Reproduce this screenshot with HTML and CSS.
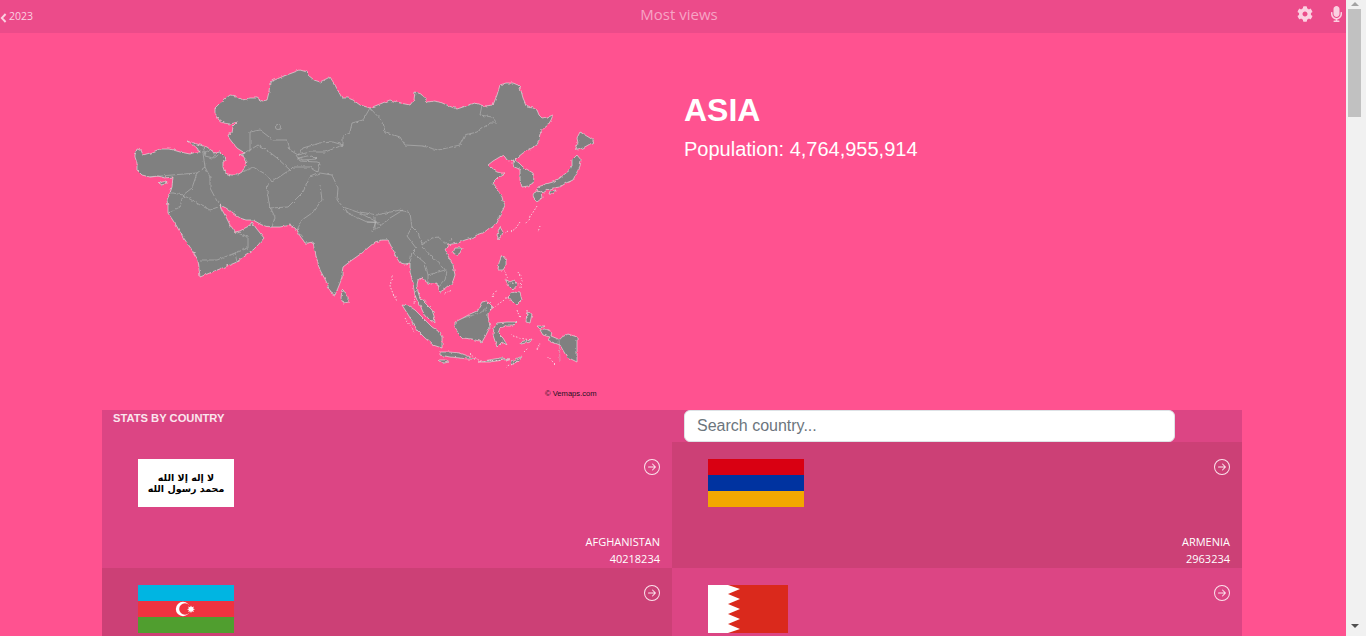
FILE: index.html
```html
<!DOCTYPE html>
<html lang="en">
<head>
<meta charset="utf-8">
<title>Most views</title>
<link rel="stylesheet" href="styles.css">
</head>
<body>
<div class="app">
  <header class="topbar">
    <a class="back">
      <svg class="chevron" viewBox="0 0 7 10"><path d="M5.6 1 1.8 5l3.8 4" /></svg>
      <span>2023</span>
    </a>
    <div class="title">Most views</div>
    <div class="tools">
      <svg class="gear" viewBox="0 0 512 512"><path d="M487.4 315.7l-42.6-24.6c4.3-23.2 4.3-47 0-70.2l42.6-24.6c4.9-2.8 7.1-8.6 5.5-14-11.1-35.6-30-67.8-54.7-94.6-3.8-4.1-10-5.1-14.8-2.3L380.8 110c-17.9-15.4-38.5-27.3-60.8-35.1V25.8c0-5.6-3.9-10.5-9.4-11.7-36.7-8.2-74.3-7.8-109.2 0-5.5 1.2-9.4 6.1-9.4 11.7V75c-22.2 7.9-42.8 19.8-60.8 35.1L88.7 85.5c-4.9-2.8-11-1.9-14.8 2.3-24.7 26.7-43.6 58.9-54.7 94.6-1.7 5.4.6 11.2 5.5 14L67.3 221c-4.3 23.2-4.3 47 0 70.2l-42.6 24.6c-4.9 2.8-7.1 8.6-5.5 14 11.1 35.6 30 67.8 54.7 94.6 3.8 4.1 10 5.1 14.8 2.3l42.6-24.6c17.9 15.4 38.5 27.3 60.8 35.1v49.2c0 5.6 3.9 10.5 9.4 11.7 36.7 8.2 74.3 7.8 109.2 0 5.5-1.2 9.4-6.1 9.4-11.7v-49.2c22.2-7.9 42.8-19.8 60.8-35.1l42.6 24.6c4.9 2.8 11 1.9 14.8-2.3 24.7-26.7 43.6-58.9 54.7-94.6 1.5-5.5-.7-11.3-5.6-14.1zM256 336c-44.1 0-80-35.9-80-80s35.9-80 80-80 80 35.9 80 80-35.9 80-80 80z"/></svg>
      <svg class="mic" viewBox="0 0 352 512"><path d="M176 352c53.02 0 96-42.98 96-96V96c0-53.02-42.98-96-96-96S80 42.98 80 96v160c0 53.02 42.98 96 96 96zm160-160h-16c-8.84 0-16 7.16-16 16v48c0 74.8-64.49 134.82-140.79 127.38C96.71 376.89 48 317.11 48 250.3V208c0-8.84-7.16-16-16-16H16c-8.84 0-16 7.16-16 16v40.16c0 89.64 63.97 169.55 152 181.69V464H96c-8.84 0-16 7.16-16 16v16c0 8.84 7.16 16 16 16h160c8.84 0 16-7.16 16-16v-16c0-8.84-7.16-16-16-16h-56v-33.77C285.71 418.47 352 344.9 352 256v-48c0-8.84-7.16-16-16-16z"/></svg>
    </div>
  </header>

  <main class="container">
    <section class="hero">
      <svg class="map" viewBox="102 33 570 377">
        <defs>
          <filter id="rough" x="-5%" y="-5%" width="110%" height="110%">
            <feTurbulence type="fractalNoise" baseFrequency="0.22" numOctaves="2" seed="4"/>
            <feDisplacementMap in="SourceGraphic" scale="3.2" xChannelSelector="R" yChannelSelector="G"/>
          </filter>
        </defs>
        <g class="terrain">
        <g class="land">
          <path d="M135 155 137 149 141 150 143 155 150 153 160 149 170 149 180 152 190 154 196 152 200 152 196 147 188 141 194 143 200 145 207 147 215 153 220 152 225 157 226 160 223 162 223 167 225 173 231 175 237 175 242 172 245 166 246 160 243 156 239 155 245 153 240 150 237 148 232 142 229 138 228 135 232 133 233 127 238 122 230 124 223 123 219 120 215 113 215 108 220 103 225 99 230 95 236 96 243 100 250 98 257 98 262 101 267 100 269 92 270 82 284 76 300 70 307 72 308 75 314 80 320 82 330 77 335 85 342 98 348 98 353 100 360 105 370 108 380 104 390 100 400 103 410 105 414 100 415 92 421 94 428 102 434 101 440 102 449 106 457 109 466 106 475 103 484 106 493 105 497 95 500 85 506 83 513 83 518 85 520 87 523 98 527 107 533 108 537 110 539 115 542 118 548 117 553 115 551 120 548 125 543 129 540 133 539 140 537 145 530 149 523 153 518 157 515 160 519 163 523 167 528 170 533 173 534 178 533 183 528 186 522 187 520 180 520 170 517 168 514 167 513 163 514 160 509 161 507 160 505 157 503 155 498 158 493 161 488 165 492 169 497 172 501 173 505 173 500 176 496 180 493 183 498 190 502 197 503 201 505 205 502 212 499 218 497 223 491 228 487 230 483 233 477 235 472 238 465 240 458 243 452 244 448 245 445 250 449 258 453 265 455 275 453 281 450 285 445 289 440 292 438 290 437 283 432 284 428 283 425 281 422 277 418 280 417 285 418 292 420 298 426 304 432 310 434 316 435 323 431 321 428 318 423 312 420 305 417 300 415 295 413 283 410 272 410 263 405 264 400 263 396 257 393 250 390 244 388 240 382 240 375 242 369 247 362 253 352 260 343 267 342 273 342 278 338 288 335 295 331 293 330 290 326 281 320 270 316 256 313 242 309 243 305 243 303 240 300 236 298 232 295 228 290 225 280 227 270 227 262 225 253 220 246 220 240 218 232 212 226 208 220 205 221 208 222 210 226 217 230 225 233 229 235 232 240 231 245 228 249 226 252 222 256 228 260 233 264 238 258 245 253 250 245 255 237 262 225 267 212 272 200 277 199 268 198 260 192 250 183 237 176 225 168 213 168 206 167 200 170 193 172 187 173 177 165 178 158 176 150 177 142 175 137 170 137 163 135 157Z"/>
          <path d="M580 132 585 135 590 138 595 142 590 144 583 148 578 150 575 148 578 143 577 138Z"/>
          <path d="M577 155 581 160 580 166 578 170 575 176 573 180 566 183 560 187 553 188 547 190 543 193 537 190 538 187 546 184 553 182 560 178 566 173 570 170 572 165 572 160Z"/>
          <path d="M535 191 541 192 542 198 537 202 534 199 533 195Z"/>
          <path d="M550 191 556 190 553 194 549 194Z"/>
          <path d="M500 227 503 232 501 237 499 240 497 235Z"/>
          <path d="M455 248 462 248 460 253 457 255 453 253Z"/>
          <path d="M342 290 346 293 348 297 348 302 343 303 341 298Z"/>
          <path d="M402 305 409 306 415 310 424 319 432 327 438 331 442 337 442 348 436 346 433 345 425 338 417 330 409 316Z"/>
          <path d="M440 352 450 352 460 353 468 356 475 359 467 359 460 358 450 357 440 355Z"/>
          <path d="M463 318 470 314 477 311 482 302 487 301 493 307 488 313 488 317 490 327 486 335 482 342 472 339 463 338 458 333 455 327 455 322Z"/>
          <path d="M497 323 507 322 517 322 513 326 506 326 500 328 498 333 503 338 507 345 502 342 499 345 497 347 495 341 493 335 494 328Z"/>
          <path d="M540 330 546 329 552 332 551 336 558 339 568 334 577 337 577 362 567 357 564 352 560 345 552 342 548 340 550 337 543 335Z"/>
          <path d="M502 255 506 260 506 265 503 270 498 270 499 263Z"/>
          <path d="M510 295 514 292 520 293 522 300 517 305 513 301 508 298Z"/>
          <path d="M158 183 167 181 165 184 161 185Z"/>
          <path d="M505 279 510 282 514 280 517 285 513 290 509 286Z"/>
          <path d="M438 360 445 360 449 362 444 363Z M512 361 522 356 518 361 511 365Z M478 362 500 358 510 359 490 362Z"/>
          <path d="M527 312 532 314 530 323 526 322Z M545 326 540 329 537 326Z M520 342 532 339 530 342 521 344Z"/>
        </g>
        <g class="borders">
          <path d="M370 108 383 122 385 132 400 137 405 145 423 146 438 150 460 145 465 135 477 132 490 123 497 123 492 117 480 115 482 105"/>
          <path d="M250 152 250 132 260 130 273 140 287 140 290 150 298 155 303 148 320 143 333 142 343 145 343 135 350 132 352 123 363 120 370 108"/>
          <path d="M245 153 258 145 267 150 277 158 290 170 285 173 272 182 267 175 253 167 243 172"/>
          <path d="M290 170 293 167 310 167 318 172 320 163 317 162 300 161 296 155 M298 155 310 152 325 152 343 145 M298 158 312 155 316 159 303 160Z"/>
          <path d="M268 183 267 193 270 207 275 217 272 227"/>
          <path d="M270 208 288 207 303 192 310 177 320 173 332 175 338 188 337 200 343 207 360 213 377 222"/>
          <path d="M320 185 322 200 312 213 302 220 297 230 303 237"/>
          <path d="M343 210 354 216 367 222 380 223"/>
          <path d="M200 152 203 153 205 167 210 177 210 188 218 203"/>
          <path d="M150 177 172 175 197 173 205 167"/>
          <path d="M197 173 192 188 183 195 200 205 210 210 218 207"/>
          <path d="M168 213 180 207 183 195 173 193 170 193"/>
          <path d="M200 260 217 260 235 253 248 248 248 237 235 232 M235 253 237 262"/>
          <path d="M203 146 205 156 213 158 220 154 M205 153 210 150 M212 150 215 156"/>
          <path d="M360 212 377 215 400 210 410 213 412 227 418 233 M375 217 375 230 390 218 403 210 M367 222 376 222 372 232"/>
          <path d="M412 227 407 236 416 248 412 252 410 263 M418 233 422 245 432 238 438 237 448 245"/>
          <path d="M422 246 432 257 443 267 447 272 445 280 438 288 M412 252 425 263 428 275 445 270 M428 275 428 283 M420 298 428 303"/>
          <path d="M463 318 480 313 487 308"/>
          <path d="M559 338 560 362"/>
          <circle cx="278" cy="127" r="2.6"/>
        </g>
        <g class="isles">
          <path d="M392 276 390 286 394 296 397 301 M416 290 414 304 M405 318 410 325 415 333 M540 226 538 232 M520 222 516 228 511 232 M537 206 532 214 526 223 M508 231 505 233 M450 241 452 238"/>
          <path d="M492 297 497 290 M505 271 507 278 M518 272 522 280 521 288 M512 283 520 285 M490 310 500 303 510 296 M517 310 520 318 M527 310 527 320 M530 340 520 338 M470 354 480 361 510 360 M505 367 520 360 M537 350 540 344 M555 364 548 357 M524 352 528 348 M444 294 452 290 M510 335 520 338"/>
        </g>
        </g>
        <text class="credit" x="545" y="395.5">© Vemaps.com</text>
      </svg>
      <div class="region">
        <h1>ASIA</h1>
        <p>Population: 4,764,955,914</p>
      </div>
    </section>

    <section class="stats">
      <div class="stats-head">
        <h2>STATS BY COUNTRY</h2>
        <div class="search"><input type="text" placeholder="Search country..."></div>
      </div>
      <div class="grid">
        <article class="tile light">
          <div class="tile-top">
            <div class="flag afghan"><span>لا إله إلا الله</span><span>محمد رسول الله</span></div>
            <svg class="go" viewBox="0 0 16 16"><path d="M1 8a7 7 0 1 0 14 0A7 7 0 0 0 1 8zm15 0A8 8 0 1 1 0 8a8 8 0 0 1 16 0zM4.5 7.5a.5.5 0 0 0 0 1h5.793l-2.147 2.146a.5.5 0 0 0 .708.708l3-3a.5.5 0 0 0 0-.708l-3-3a.5.5 0 1 0-.708.708L10.293 7.5H4.5z"/></svg>
          </div>
          <div class="meta"><div>AFGHANISTAN</div><div>40218234</div></div>
        </article>
        <article class="tile dark">
          <div class="tile-top">
            <svg class="flag" viewBox="0 0 96 48"><rect width="96" height="16" fill="#d90012"/><rect y="16" width="96" height="16" fill="#0033a0"/><rect y="32" width="96" height="16" fill="#f2a800"/></svg>
            <svg class="go" viewBox="0 0 16 16"><path d="M1 8a7 7 0 1 0 14 0A7 7 0 0 0 1 8zm15 0A8 8 0 1 1 0 8a8 8 0 0 1 16 0zM4.5 7.5a.5.5 0 0 0 0 1h5.793l-2.147 2.146a.5.5 0 0 0 .708.708l3-3a.5.5 0 0 0 0-.708l-3-3a.5.5 0 1 0-.708.708L10.293 7.5H4.5z"/></svg>
          </div>
          <div class="meta"><div>ARMENIA</div><div>2963234</div></div>
        </article>
        <article class="tile dark">
          <div class="tile-top">
            <svg class="flag" viewBox="0 0 96 48"><rect width="96" height="16" fill="#00b5e2"/><rect y="16" width="96" height="16" fill="#ef3340"/><rect y="32" width="96" height="16" fill="#509e2f"/><circle cx="45" cy="24" r="7.2" fill="#fff"/><circle cx="47" cy="24" r="5.8" fill="#ef3340"/><path fill="#fff" d="M53 20.4 53.9 22.3 55.9 21.5 55.1 23.4 57 24.3 55.1 25.1 55.9 27 53.9 26.2 53 28.1 52.1 26.2 50.2 27 50.9 25.1 49 24.3 50.9 23.4 50.2 21.5 52.1 22.3Z"/></svg>
            <svg class="go" viewBox="0 0 16 16"><path d="M1 8a7 7 0 1 0 14 0A7 7 0 0 0 1 8zm15 0A8 8 0 1 1 0 8a8 8 0 0 1 16 0zM4.5 7.5a.5.5 0 0 0 0 1h5.793l-2.147 2.146a.5.5 0 0 0 .708.708l3-3a.5.5 0 0 0 0-.708l-3-3a.5.5 0 1 0-.708.708L10.293 7.5H4.5z"/></svg>
          </div>
        </article>
        <article class="tile light">
          <div class="tile-top">
            <svg class="flag narrow" viewBox="0 0 80 48"><rect width="80" height="48" fill="#da291c"/><path fill="#fff" d="M0 0H20L32 4 20 9 32 14 20 19 32 24 20 29 32 34 20 39 32 44 20 48H0Z"/></svg>
            <svg class="go" viewBox="0 0 16 16"><path d="M1 8a7 7 0 1 0 14 0A7 7 0 0 0 1 8zm15 0A8 8 0 1 1 0 8a8 8 0 0 1 16 0zM4.5 7.5a.5.5 0 0 0 0 1h5.793l-2.147 2.146a.5.5 0 0 0 .708.708l3-3a.5.5 0 0 0 0-.708l-3-3a.5.5 0 1 0-.708.708L10.293 7.5H4.5z"/></svg>
          </div>
        </article>
      </div>
    </section>
  </main>
</div>

<aside class="scrollbar">
  <div class="arrow-up"></div>
  <div class="thumb"></div>
  <div class="arrow-down"></div>
</aside>
</body>
</html>
```
FILE: styles.css
```css
* { box-sizing: border-box; }

html, body { height: 100%; }

body {
  margin: 0;
  display: flex;
  overflow: hidden;
  background: #f1f1f1;
  font-family: "Liberation Sans", Arial, sans-serif;
}

.app {
  flex: none;
  width: 1346px;
  height: 100%;
  overflow: hidden;
  background: #ff5290;
}

/* top bar */
.topbar {
  display: grid;
  grid-template-columns: 1fr auto 1fr;
  align-items: center;
  height: 33px;
  background: #ec4b8a;
  color: #fbd0e1;
}

.back {
  display: flex;
  align-items: center;
  gap: 2px;
  padding-bottom: 1px;
  font-family: "Open Sans", sans-serif;
  font-size: 10.5px;
}

.chevron {
  width: 7px;
  height: 10px;
  margin-top: 3px;
  fill: none;
  stroke: #fbd0e1;
  stroke-width: 1.9;
}

.title {
  margin-left: 12px;
  padding-bottom: 5px;
  font-family: "Open Sans", sans-serif;
  font-size: 15px;
  color: #f7a4c5;
}

.tools {
  display: flex;
  justify-content: flex-end;
  align-items: center;
  gap: 18px;
  padding: 0 4px 5px 0;
}

.gear { width: 16px; height: 16px; fill: #fbd0e1; }
.mic { width: 11px; height: 16px; fill: #fbd0e1; }

/* layout */
.container {
  width: 1140px;
  margin-left: 102px;
}

.hero {
  display: grid;
  grid-template-columns: 570px 570px;
  height: 377px;
}

.map { width: 570px; height: 377px; display: block; }

.terrain { filter: url(#rough); }

.land path {
  fill: #808080;
  stroke: #e9e9e9;
  stroke-width: 0.6;
  stroke-linejoin: round;
}

.borders path,
.borders circle {
  fill: none;
  stroke: #c4c4c4;
  stroke-width: 0.5;
}

.isles path {
  fill: none;
  stroke: #f3dbe4;
  stroke-width: 0.9;
  stroke-dasharray: 1.5 1.6;
}

.credit {
  font-family: "Liberation Sans", sans-serif;
  font-size: 7.6px;
  fill: #1c1020;
}

.region {
  padding: 58px 12px 0;
  color: #fff;
}

.region h1 {
  margin: 0;
  font-size: 32px;
  line-height: 38px;
  font-weight: 700;
}

.region p {
  margin: 8px 0 0;
  font-size: 20px;
  line-height: 24px;
}

/* stats */
.stats-head {
  display: grid;
  grid-template-columns: 570px 570px;
  height: 32px;
  background: #dc4584;
}

.stats-head h2 {
  margin: 0;
  padding-left: 11px;
  font-size: 11.2px;
  line-height: 16px;
  font-weight: 700;
  color: #fbe6ee;
}

.search { padding-left: 12px; }

.search input {
  display: block;
  width: 491px;
  height: 32px;
  padding: 0 12px;
  border: 1px solid #dee2e6;
  border-radius: 6px;
  background: #fff;
  font-family: "Liberation Sans", sans-serif;
  font-size: 16px;
  outline: none;
}

.search input::placeholder { color: #6c757d; opacity: 1; }

.grid {
  display: grid;
  grid-template-columns: 570px 570px;
  grid-auto-rows: 126px;
}

.tile {
  display: flex;
  flex-direction: column;
  justify-content: space-between;
  padding: 17px 12px 1px 36px;
  color: #fff;
}

.tile.light { background: #dc4584; }
.tile.dark { background: #cc4076; }

.tile-top {
  display: flex;
  justify-content: space-between;
  align-items: flex-start;
}

.flag {
  display: block;
  width: 96px;
  height: 48px;
}

.flag.narrow { width: 80px; }

.afghan {
  display: flex;
  flex-direction: column;
  align-items: center;
  justify-content: center;
  background: #fff;
  color: #000;
  font-family: "DejaVu Sans", sans-serif;
  font-size: 9.5px;
  font-weight: 700;
  line-height: 11px;
  white-space: nowrap;
}

.go {
  flex: none;
  width: 16px;
  height: 16px;
  fill: #fbe3ec;
}

.meta {
  font-family: "Open Sans", sans-serif;
  font-size: 11px;
  line-height: 17px;
  text-align: right;
}

/* window scrollbar */
.scrollbar {
  flex: 1;
  background: #f1f1f1;
  display: flex;
  flex-direction: column;
  align-items: flex-start;
  padding-left: 2px;
}

.thumb {
  width: 13px;
  height: 108px;
  margin-top: 3px;
  background: #c1c1c1;
}

.arrow-up {
  width: 0;
  height: 4px;
  margin: 2px 0 0 3px;
  border-left: 4px solid transparent;
  border-right: 4px solid transparent;
  border-bottom: 4px solid #a3a3a3;
}

.arrow-down {
  width: 0;
  height: 4px;
  margin: auto 0 8px 3px;
  border-left: 4px solid transparent;
  border-right: 4px solid transparent;
  border-top: 4px solid #505050;
}
```
